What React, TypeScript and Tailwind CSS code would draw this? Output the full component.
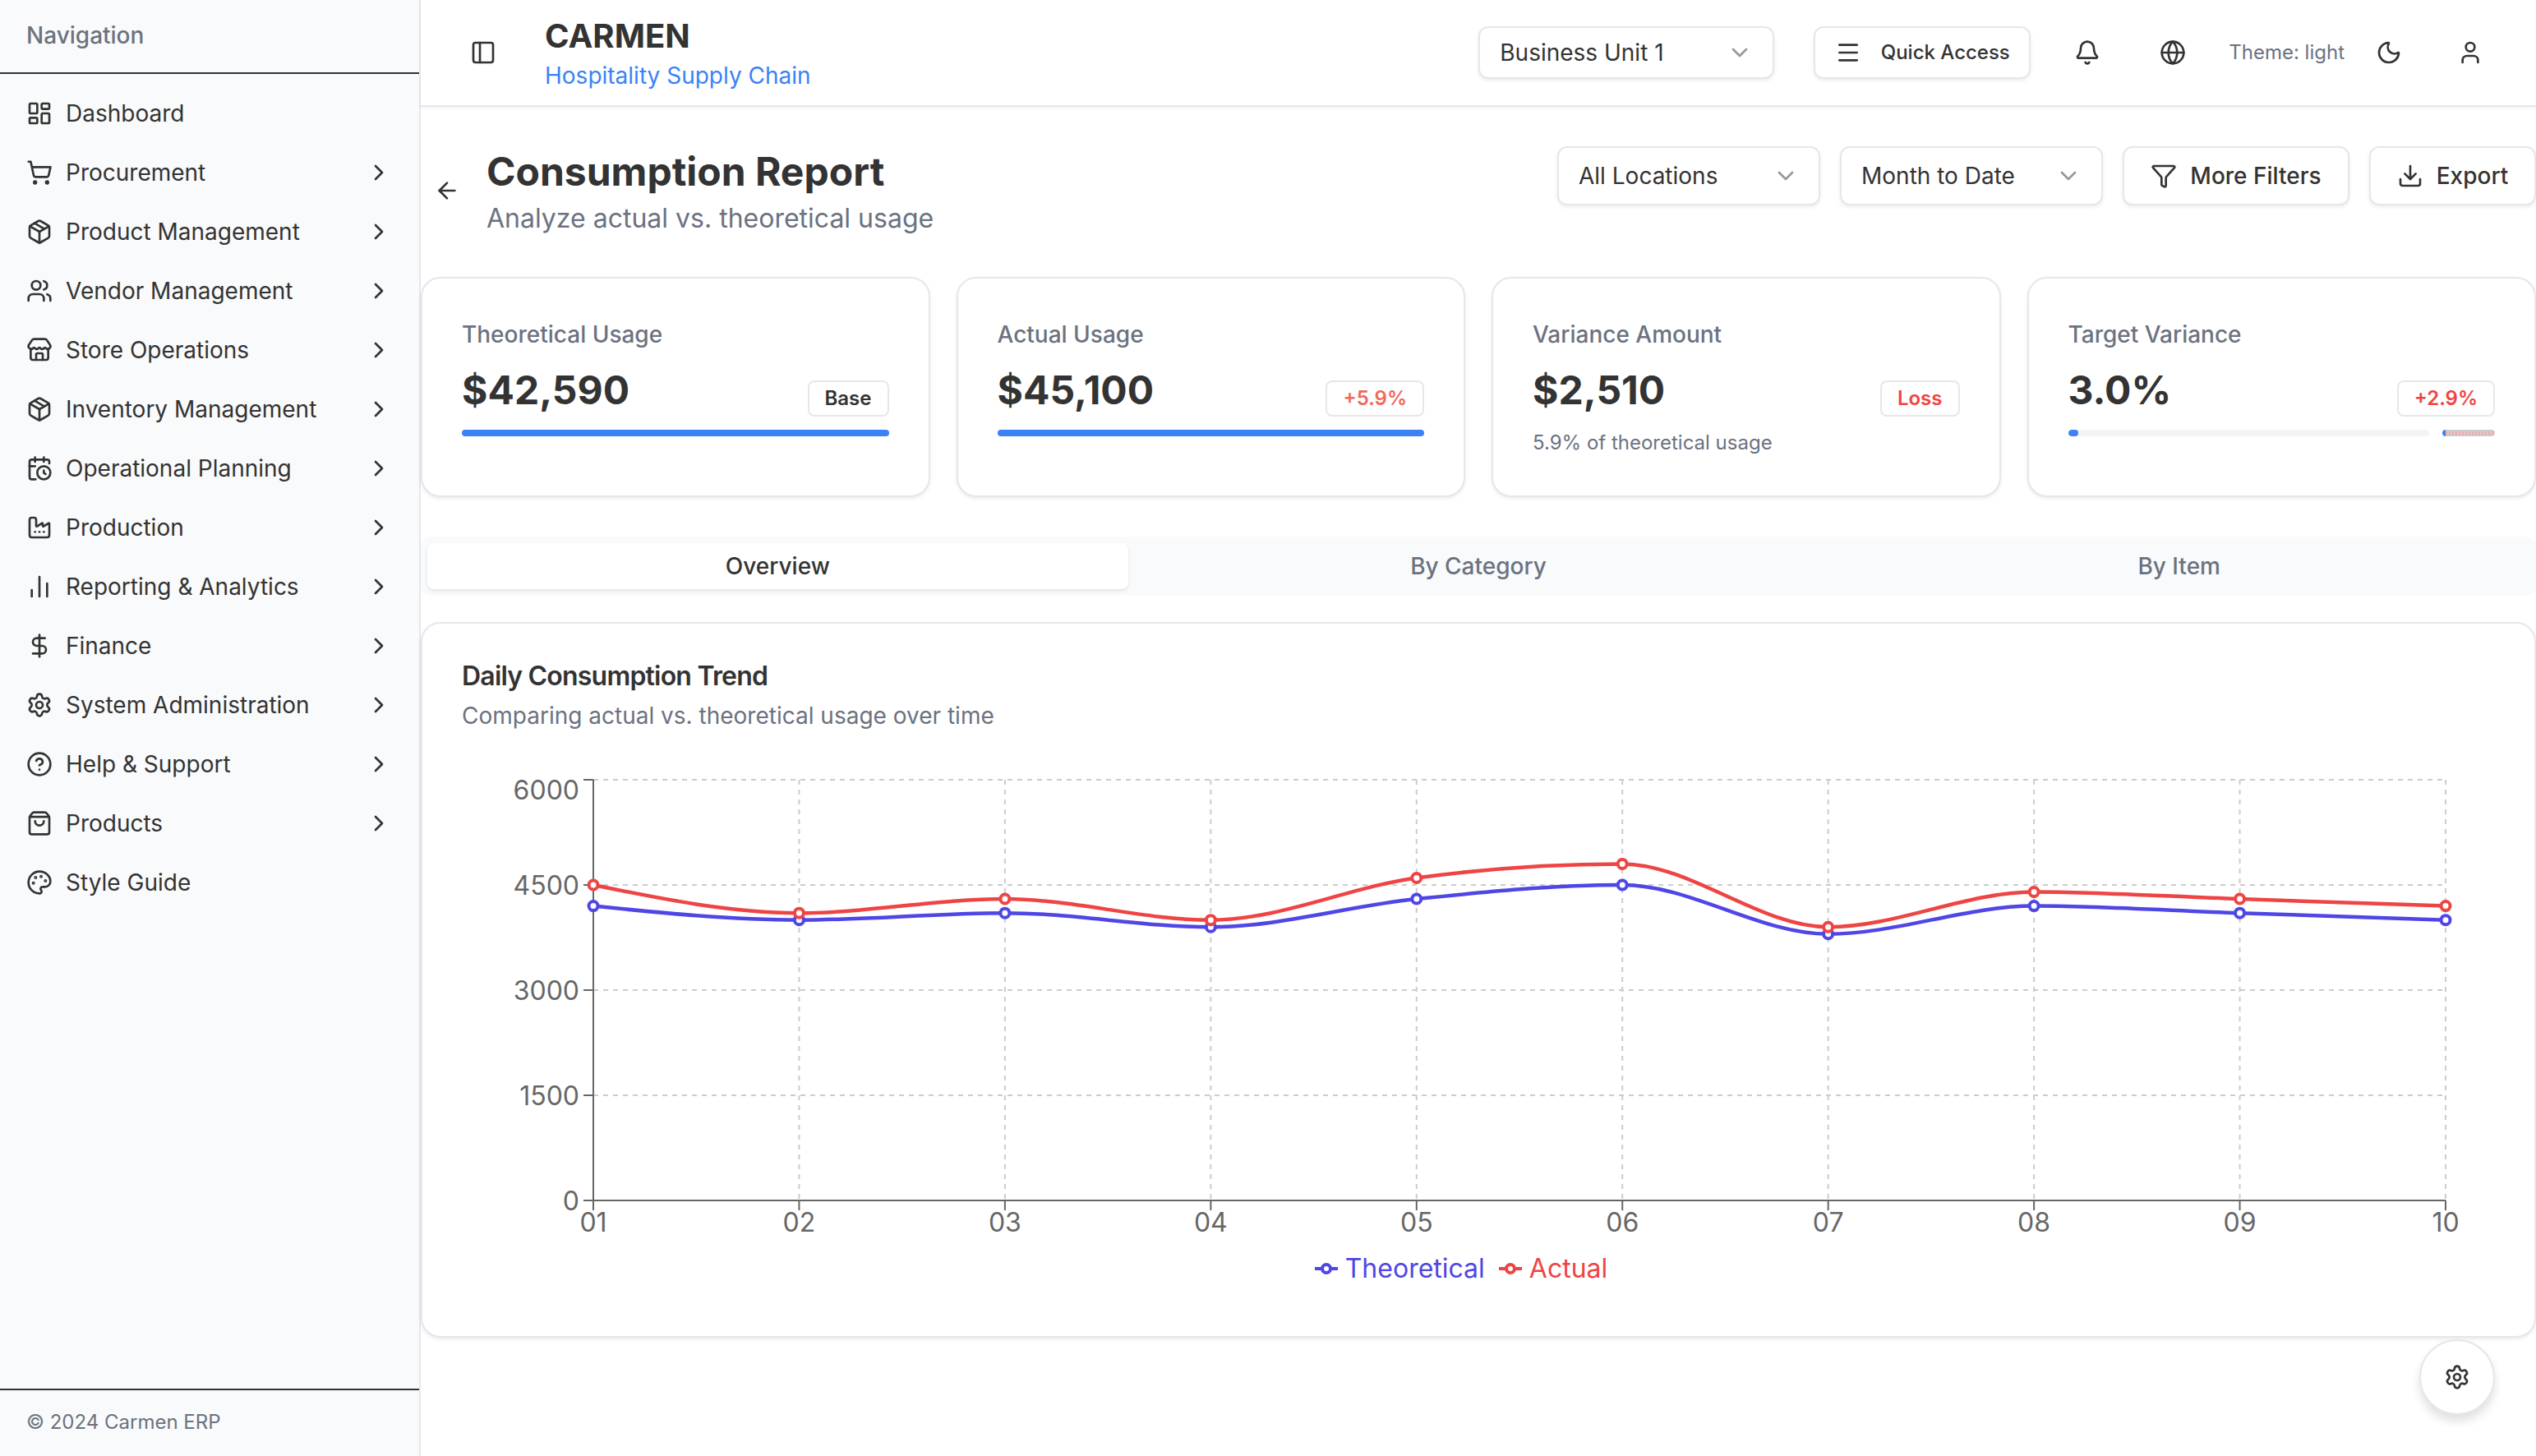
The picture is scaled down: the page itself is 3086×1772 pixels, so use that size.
import type { ReactElement, ReactNode } from 'react'
import {
  ArrowLeft,
  Bell,
  CalendarClock,
  ChartNoAxesColumn,
  ChevronDown,
  ChevronRight,
  CircleHelp,
  DollarSign,
  Download,
  Factory,
  Filter,
  Globe,
  LayoutDashboard,
  Menu,
  Moon,
  Package,
  Palette,
  PanelLeft,
  Settings,
  ShoppingBag,
  ShoppingCart,
  Store,
  User,
  Users,
  type LucideIcon
} from 'lucide-react'

const NAV_ITEMS: { label: string; icon: LucideIcon; children?: boolean }[] = [
  { label: 'Dashboard', icon: LayoutDashboard },
  { label: 'Procurement', icon: ShoppingCart, children: true },
  { label: 'Product Management', icon: Package, children: true },
  { label: 'Vendor Management', icon: Users, children: true },
  { label: 'Store Operations', icon: Store, children: true },
  { label: 'Inventory Management', icon: Package, children: true },
  { label: 'Operational Planning', icon: CalendarClock, children: true },
  { label: 'Production', icon: Factory, children: true },
  { label: 'Reporting & Analytics', icon: ChartNoAxesColumn, children: true },
  { label: 'Finance', icon: DollarSign, children: true },
  { label: 'System Administration', icon: Settings, children: true },
  { label: 'Help & Support', icon: CircleHelp, children: true },
  { label: 'Products', icon: ShoppingBag, children: true },
  { label: 'Style Guide', icon: Palette }
]

// Chart geometry is in page pixels, the svg's viewBox starts where the svg sits.
const CHART = { left: 562, top: 924, width: 2474, height: 592 }
const PLOT = { x0: 722, x1: 2976, y0: 950, y1: 1462, max: 6000 }
const DAYS = ['01', '02', '03', '04', '05', '06', '07', '08', '09', '10']
const THEORETICAL = [4200, 4000, 4100, 3900, 4300, 4500, 3800, 4200, 4100, 4000]
const ACTUAL = [4500, 4100, 4300, 4000, 4600, 4800, 3900, 4400, 4300, 4200]

const xAt = (index: number): number => PLOT.x0 + ((PLOT.x1 - PLOT.x0) * index) / 9
const yAt = (value: number): number => PLOT.y1 - ((PLOT.y1 - PLOT.y0) * value) / PLOT.max

// Monotone cubic through the points, same shape a monotoneX curve gives.
function monotonePath(values: number[]): string {
  const xs = values.map((_, i) => xAt(i))
  const ys = values.map(yAt)
  const n = xs.length
  const slopes: number[] = []
  for (let i = 0; i < n - 1; i++) slopes.push((ys[i + 1] - ys[i]) / (xs[i + 1] - xs[i]))
  const tangents: number[] = new Array(n).fill(0)
  for (let i = 1; i < n - 1; i++) {
    const h0 = xs[i] - xs[i - 1]
    const h1 = xs[i + 1] - xs[i]
    const p = (slopes[i - 1] * h1 + slopes[i] * h0) / (h0 + h1)
    const sign = (Math.sign(slopes[i - 1]) + Math.sign(slopes[i])) || 0
    tangents[i] = sign * Math.min(Math.abs(slopes[i - 1]), Math.abs(slopes[i]), 0.5 * Math.abs(p)) || 0
  }
  tangents[0] = (3 * slopes[0] - tangents[1]) / 2
  tangents[n - 1] = (3 * slopes[n - 2] - tangents[n - 2]) / 2
  let d = `M${xs[0]},${ys[0]}`
  for (let i = 0; i < n - 1; i++) {
    const h = (xs[i + 1] - xs[i]) / 3
    d += `C${xs[i] + h},${ys[i] + h * tangents[i]} ${xs[i + 1] - h},${ys[i + 1] - h * tangents[i + 1]} ${xs[i + 1]},${ys[i + 1]}`
  }
  return d
}

function Sidebar(): ReactElement {
  return (
    <aside className="flex h-full w-[512px] shrink-0 flex-col border-r-2 border-[#e5e7eb] bg-[#f9fafb]">
      <div className="flex h-[90px] items-center border-b-2 border-[#333333] pb-[2px] pl-8 text-[28px] font-medium text-[#6b7280]">
        Navigation
      </div>
      <nav className="flex-1 pt-3">
        {NAV_ITEMS.map((item) => (
          <div key={item.label} className="flex h-[72px] items-center gap-4 pl-8 pr-[33px] text-[28px] text-[#333333]">
            <item.icon size={32} strokeWidth={2} className="shrink-0" />
            <span className="flex-1">{item.label}</span>
            {item.children ? <ChevronRight size={32} strokeWidth={2} /> : null}
          </div>
        ))}
      </nav>
      <div className="flex h-[82px] items-center border-t-2 border-[#333333] pb-[2px] pl-8 text-2xl text-[#6b7280]">
        © 2024 Carmen ERP
      </div>
    </aside>
  )
}

function SelectBox({ label, className }: { label: string; className: string }): ReactElement {
  return (
    <div
      className={`flex items-center justify-between rounded-xl border-2 border-[#e5e7eb] bg-white px-6 text-[28px] text-[#333333] shadow-[0_2px_4px_rgba(0,0,0,0.08)] ${className}`}
    >
      <span>{label}</span>
      <ChevronDown size={32} className="opacity-50" />
    </div>
  )
}

function TopBar(): ReactElement {
  return (
    <header className="flex h-[130px] shrink-0 items-center border-b-2 border-[#e5e7eb] bg-white pr-[64px] shadow-[0_2px_4px_rgba(0,0,0,0.05)]">
      <PanelLeft size={32} strokeWidth={2} className="ml-[60px] text-[#333333]" />
      <div className="ml-[59px] flex flex-col pt-1">
        <span className="text-[40px] font-bold leading-[48px] text-[#333333]">CARMEN</span>
        <span className="mt-1 text-[28px] leading-10 text-[#3b82f6]">Hospitality Supply Chain</span>
      </div>
      <div className="ml-auto flex items-center">
        <SelectBox label="Business Unit 1" className="h-[64px] w-[360px]" />
        <div className="ml-[48px] flex h-[64px] w-[264px] items-center justify-center gap-6 rounded-xl border-2 border-[#e5e7eb] bg-white text-2xl font-medium text-[#333333] shadow-[0_2px_4px_rgba(0,0,0,0.08)]">
          <Menu size={32} />
          <span>Quick Access</span>
        </div>
        <Bell size={32} className="ml-[53px] text-[#333333]" />
        <Globe size={32} className="ml-[72px] text-[#333333]" />
        <span className="ml-[52px] text-2xl text-[#6b7280]">Theme: light</span>
        <Moon size={32} className="ml-[38px] text-[#333333]" />
        <User size={32} className="ml-[67px] text-[#333333]" />
      </div>
    </header>
  )
}

function PageHeader(): ReactElement {
  return (
    <div className="flex items-start">
      <div className="flex h-[108px] w-[64px] items-center justify-center">
        <ArrowLeft size={32} className="text-[#333333]" />
      </div>
      <div className="ml-4">
        <h1 className="text-[48px] font-bold leading-[62px] text-[#333333]">Consumption Report</h1>
        <p className="mt-[2px] text-[32px] leading-[48px] text-[#6b7280]">Analyze actual vs. theoretical usage</p>
      </div>
      <div className="ml-auto flex gap-6">
        <SelectBox label="All Locations" className="h-[72px] w-[320px]" />
        <SelectBox label="Month to Date" className="h-[72px] w-[320px]" />
        <ActionButton icon={<Filter size={32} />} label="More Filters" className="w-[276px]" />
        <ActionButton icon={<Download size={32} />} label="Export" className="w-[203px]" />
      </div>
    </div>
  )
}

function ActionButton({ icon, label, className }: { icon: ReactNode; label: string; className: string }): ReactElement {
  return (
    <div
      className={`flex h-[72px] items-center justify-center gap-4 rounded-xl border-2 border-[#e5e7eb] bg-white text-[28px] font-medium text-[#333333] shadow-[0_2px_4px_rgba(0,0,0,0.08)] ${className}`}
    >
      {icon}
      <span>{label}</span>
    </div>
  )
}

function StatCard({
  label,
  value,
  badge,
  badgeClass,
  children
}: {
  label: string
  value: string
  badge: string
  badgeClass: string
  children: ReactNode
}): ReactElement {
  return (
    <div className="h-[268px] rounded-3xl border-2 border-[#e5e7eb] bg-white p-12 shadow-[0_2px_4px_rgba(0,0,0,0.08)]">
      <div className="text-[28px] font-medium leading-10 text-[#6b7280]">{label}</div>
      <div className="mt-4 flex h-[64px] items-end justify-between">
        <span className="text-[48px] font-bold leading-[64px] text-[#333333]">{value}</span>
        <span
          className={`flex h-[44px] items-center rounded-lg border-2 border-[#e5e7eb] bg-white px-[19px] text-2xl font-semibold ${badgeClass}`}
        >
          {badge}
        </span>
      </div>
      <div className="mt-4">{children}</div>
    </div>
  )
}

function ProgressFull(): ReactElement {
  return <div className="h-2 rounded-full bg-[#3b82f6]" />
}

function TargetBar(): ReactElement {
  return (
    <div className="flex h-2 items-center gap-4">
      <div className="h-2 flex-1 overflow-hidden rounded-full bg-[#f3f4f6]">
        <div className="h-2 w-3 rounded-full bg-[#3b82f6]" />
      </div>
      <div className="relative h-2 w-[64px] overflow-hidden rounded-full bg-[#cfcaca]">
        <div className="mt-[2px] h-1 bg-[repeating-linear-gradient(90deg,#f3a6a6_0_2px,#d8cfcf_2px_4px)]" />
        <div className="absolute left-0 top-0 h-2 w-1 rounded-l-full bg-[#3b82f6]" />
      </div>
    </div>
  )
}

function TabBar(): ReactElement {
  const tabs = ['Overview', 'By Category', 'By Item']
  return (
    <div className="mt-12 grid h-[72px] grid-cols-3 rounded-xl bg-[#f9fafb] p-2">
      {tabs.map((tab, i) => (
        <div
          key={tab}
          className={
            i === 0
              ? 'flex items-center justify-center rounded-lg bg-white text-[28px] font-medium text-[#333333] shadow-[0_2px_4px_rgba(0,0,0,0.1)]'
              : 'flex items-center justify-center text-[28px] font-medium text-[#6b7280]'
          }
        >
          {tab}
        </div>
      ))}
    </div>
  )
}

function Series({ values, color }: { values: number[]; color: string }): ReactElement {
  return (
    <g>
      <path d={monotonePath(values)} fill="none" stroke={color} strokeWidth={4.5} />
      {values.map((v, i) => (
        <circle key={i} cx={xAt(i)} cy={yAt(v)} r={5.5} fill="#fff" stroke={color} strokeWidth={4} />
      ))}
    </g>
  )
}

function TrendChart(): ReactElement {
  const yTicks = [6000, 4500, 3000, 1500, 0]
  return (
    <svg
      className="block h-[592px] w-full"
      viewBox={`${CHART.left} ${CHART.top} ${CHART.width} ${CHART.height}`}
      fontFamily="Inter, sans-serif"
      fontSize={32}
    >
      <g stroke="#cccccc" strokeWidth={2} strokeDasharray="6 6">
        {yTicks.slice(0, 4).map((t) => (
          <line key={t} x1={PLOT.x0} x2={PLOT.x1} y1={yAt(t)} y2={yAt(t)} />
        ))}
        {DAYS.map((_, i) => (
          <line key={i} x1={xAt(i)} x2={xAt(i)} y1={PLOT.y0} y2={PLOT.y1} />
        ))}
      </g>
      <g stroke="#666666" strokeWidth={2}>
        <line x1={PLOT.x0} x2={PLOT.x0} y1={PLOT.y0} y2={PLOT.y1} />
        <line x1={PLOT.x0} x2={PLOT.x1} y1={PLOT.y1} y2={PLOT.y1} />
        {yTicks.map((t) => (
          <line key={t} x1={PLOT.x0 - 12} x2={PLOT.x0} y1={yAt(t)} y2={yAt(t)} />
        ))}
        {DAYS.map((_, i) => (
          <line key={i} x1={xAt(i)} x2={xAt(i)} y1={PLOT.y1} y2={PLOT.y1 + 12} />
        ))}
      </g>
      {yTicks.map((t) => (
        <text key={t} x={705} y={t === 6000 ? 974 : yAt(t) + 12} textAnchor="end" fill="#666666">
          {t}
        </text>
      ))}
      {DAYS.map((day, i) => (
        <text key={day} x={xAt(i)} y={1500} textAnchor="middle" fill="#666666">
          {day}
        </text>
      ))}
      <Series values={THEORETICAL} color="#4f46e5" />
      <Series values={ACTUAL} color="#ef4444" />
    </svg>
  )
}

function LegendItem({ label, color, textClass }: { label: string; color: string; textClass: string }): ReactElement {
  return (
    <span className={`flex items-center gap-[9px] ${textClass}`}>
      <svg width="28" height="28" viewBox="0 0 28 28">
        <line x1="0" x2="28" y1="14" y2="14" stroke={color} strokeWidth={4} />
        <circle cx="14" cy="14" r="5" fill="#fff" stroke={color} strokeWidth={4} />
      </svg>
      {label}
    </span>
  )
}

export default function App(): ReactElement {
  return (
    <div className="relative flex h-[1772px] w-[3086px] overflow-hidden bg-white font-['Inter',sans-serif]">
      <Sidebar />
      <div className="flex min-w-0 flex-1 flex-col">
        <TopBar />
        <main className="flex-1 pt-[48px]">
          <PageHeader />
          <div className="mt-[47px] grid grid-cols-4 gap-8">
            <StatCard label="Theoretical Usage" value="$42,590" badge="Base" badgeClass="text-[#333333]">
              <ProgressFull />
            </StatCard>
            <StatCard label="Actual Usage" value="$45,100" badge="+5.9%" badgeClass="text-[#ef6a5a]">
              <ProgressFull />
            </StatCard>
            <StatCard label="Variance Amount" value="$2,510" badge="Loss" badgeClass="text-[#ef4444]">
              <p className="text-2xl leading-8 text-[#6b7280]">5.9% of theoretical usage</p>
            </StatCard>
            <StatCard label="Target Variance" value="3.0%" badge="+2.9%" badgeClass="text-[#ef4444]">
              <TargetBar />
            </StatCard>
          </div>
          <TabBar />
          <section className="mt-8 rounded-3xl border-2 border-[#e5e7eb] bg-white px-12 pb-[58px] pt-12 shadow-[0_2px_4px_rgba(0,0,0,0.08)]">
            <h2 className="text-[32px] font-semibold leading-8 tracking-[-0.8px] text-[#333333]">Daily Consumption Trend</h2>
            <p className="mt-3 text-[28px] leading-10 text-[#6b7280]">Comparing actual vs. theoretical usage over time</p>
            <div className="mt-8">
              <TrendChart />
            </div>
            <div className="mt-[5px] flex h-12 items-center justify-center gap-[17px] pr-[42px] text-[32px]">
              <LegendItem label="Theoretical" color="#4f46e5" textClass="text-[#4f46e5]" />
              <LegendItem label="Actual" color="#ef4444" textClass="text-[#ef4444]" />
            </div>
          </section>
        </main>
      </div>
      <div className="absolute bottom-[50px] right-[50px] flex h-[92px] w-[92px] items-center justify-center rounded-full border-2 border-[#e5e7eb] bg-white text-[#333333] shadow-[0_8px_12px_rgba(0,0,0,0.12)]">
        <Settings size={32} />
      </div>
    </div>
  )
}
